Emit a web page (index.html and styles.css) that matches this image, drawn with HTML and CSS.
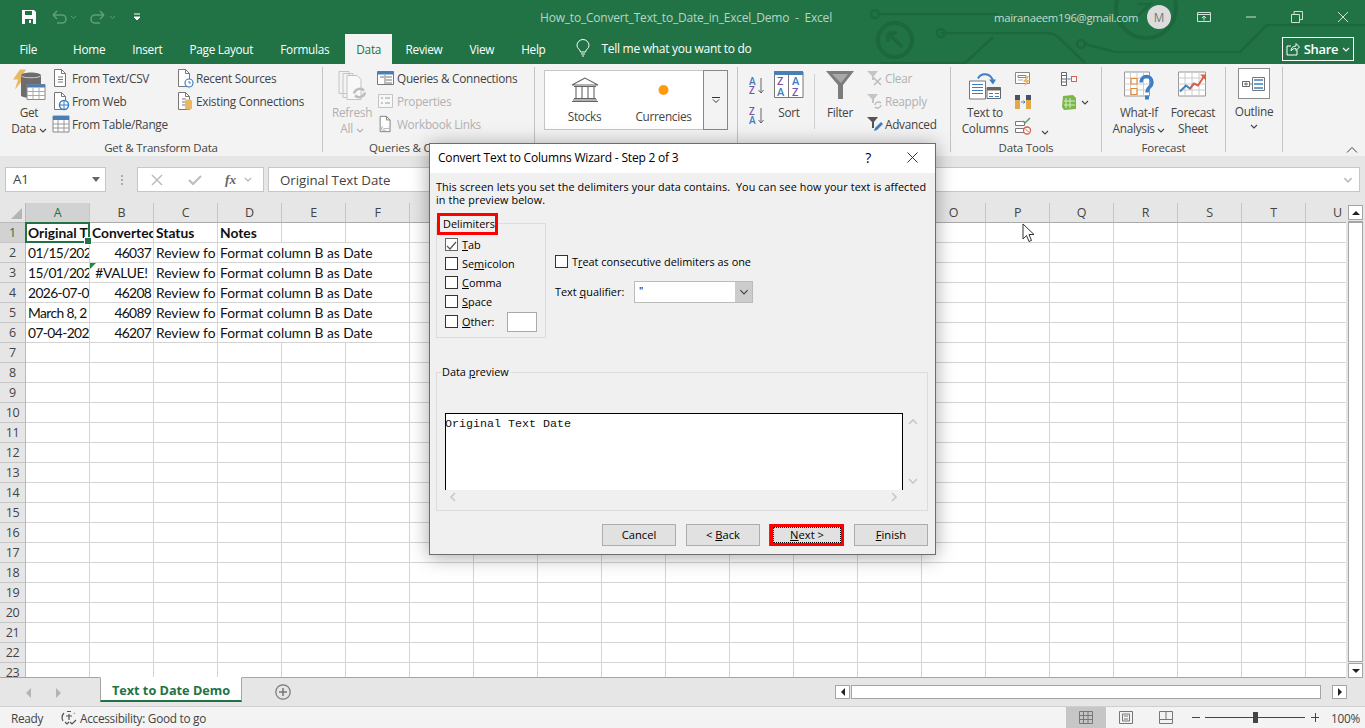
FILE: index.html
```html
<!DOCTYPE html>
<html lang="en">
  <head>
    <meta charset="UTF-8" />
    <title>How_to_Convert_Text_to_Date_in_Excel_Demo - Excel</title>
    <link rel="stylesheet" href="styles.css">
  </head>
  <body>
    <!-- shared icons -->
    <svg class="defs" width="0" height="0">
      <symbol id="page" viewBox="0 0 18 20">
        <path d="M2.5 1.5h7l4 4v13h-11z" fill="#fff" stroke="#777"/>
        <path d="M9.5 1.5v4h4" fill="none" stroke="#777"/>
      </symbol>
      <symbol id="table" viewBox="0 0 18 18">
        <path d="M1 1h16v16H1z" fill="#fff" stroke="#888"/>
        <path d="M1 1h16v4H1z" fill="#4a7fb5"/>
        <path d="M1 9h16M1 13h16M6 5v12M12 5v12" stroke="#999" fill="none"/>
      </symbol>
      <symbol id="chev" viewBox="0 0 8 5">
        <path d="M1 1l3 3 3-3" fill="none" stroke="currentColor" stroke-width="1.1"/>
      </symbol>
    </svg>

    <header class="titlebar">
      <svg class="circuit" width="505" height="64" viewBox="860 0 505 64">
        <g fill="none" stroke="#1c673c" stroke-width="2.5">
          <circle cx="895" cy="40" r="17" stroke-width="4"/>
          <path d="M888 33l14 14M888 33h9M888 33v9" stroke-width="3.5"/>
          <circle cx="875" cy="14" r="4"/>
          <path d="M879 14h120M941 33h105q8 0 12 4l27 26"/>
          <circle cx="941" cy="33" r="4"/>
          <path d="M880 63h85l28-26"/>
          <circle cx="1081" cy="44" r="4"/>
          <path d="M1085 44l30 8h125l27-27h98"/>
          <circle cx="1146" cy="8" r="30" stroke-width="4"/>
          <path d="M1138 4h12l-12 12"/>
        </g>
      </svg>
      <div class="title-row">
        <div class="quick">
          <svg width="16" height="16" viewBox="0 0 16 16"><path d="M1 1h12l2 2v12H1z" fill="#fff"/><path d="M4 2h7v4H4zM4 10h8v5H4z" fill="#217346"/><path d="M8 11h2v3H8z" fill="#fff"/></svg>
          <svg class="dim" width="26" height="16" viewBox="0 0 26 16"><path d="M2 6h9a4 4 0 0 1 0 8H6M2 6l4-4M2 6l4 4" fill="none" stroke="#5f9d7c" stroke-width="1.6"/><path d="M20 7l2.500 2.500L25 7" fill="none" stroke="#5f9d7c"/></svg>
          <svg class="dim" width="26" height="16" viewBox="0 0 26 16"><path d="M14 6H5a4 4 0 0 0 0 8h5M14 6l-4-4M14 6l-4 4" fill="none" stroke="#5f9d7c" stroke-width="1.6"/><path d="M20 7l2.500 2.500L25 7" fill="none" stroke="#5f9d7c"/></svg>
          <svg class="customize" width="8" height="8" viewBox="0 0 8 8"><path d="M1 1h6M1 4h6l-3 3z" fill="#fff" stroke="#fff"/></svg>
        </div>
        <div class="doc-title">How_to_Convert_Text_to_Date_in_Excel_Demo&nbsp; -&nbsp; Excel</div>
        <div class="account">mairanaeem196@gmail.com</div>
        <div class="avatar">M</div>
        <div class="win-btns">
          <svg width="14" height="12" viewBox="0 0 14 12"><path d="M.5 1.500h13v9H.5zM.5 3.500h13M7 9.500V5M5 7l2-2 2 2" fill="none" stroke="#cfe1d6"/></svg>
          <svg width="12" height="12" viewBox="0 0 12 12"><path d="M1 6h10" stroke="#cfe1d6"/></svg>
          <svg width="12" height="12" viewBox="0 0 12 12"><path d="M.5 3.500h8v8h-8zM3 3.500v-3h8.500v8h-3" fill="none" stroke="#cfe1d6"/></svg>
          <svg width="12" height="12" viewBox="0 0 12 12"><path d="M1 1l10 10M11 1L1 11" stroke="#cfe1d6"/></svg>
        </div>
      </div>
      <nav class="tabs">
        <span class="tab tab-file">File</span>
        <span class="tab">Home</span>
        <span class="tab">Insert</span>
        <span class="tab">Page Layout</span>
        <span class="tab">Formulas</span>
        <span class="tab tab-active">Data</span>
        <span class="tab">Review</span>
        <span class="tab">View</span>
        <span class="tab">Help</span>
        <svg class="bulb" width="14" height="17" viewBox="0 0 14 17"><path d="M4.500 12C4 9 1 8.500 1 5.500a6 6 0 0 1 12 0c0 3-3 3.500-3.500 6.500zM5 14h4M6 16h2" fill="none" stroke="#fff"/></svg>
        <span class="tell">Tell me what you want to do</span>
        <div class="share">
          <svg width="14" height="14" viewBox="0 0 14 14"><path d="M5 4H1v9h10V8M5 9c0-3 2-5 5-5V1.500L13.500 5 10 8.500V6.500C8 6.500 6 7 5 9z" fill="none" stroke="#fff"/></svg>
          <span>Share</span>
          <svg width="8" height="5"><use href="#chev"/></svg>
        </div>
      </nav>
    </header>

    <section class="ribbon">
      <!-- get & transform -->
      <div class="group g-get">
        <div class="group-body">
          <div class="big big-get">
            <svg class="big-icon" width="34" height="34" viewBox="0 0 34 34">
              <path d="M8 0h6l-4 7h4L3 20l3-10H1z" fill="#eab765"/>
              <path d="M9 6c0-4 20-4 20 0v20c0 3-20 3-20 0z" fill="#6d6d6d"/>
              <path d="M9 6c0 3 20 3 20 0" fill="none" stroke="#ccc"/>
              <path d="M15 15h18v15H15z" fill="#fff" stroke="#888"/>
              <path d="M15 15h18v3H15z" fill="#4a7fb5"/>
              <path d="M15 22h18M15 26h18M21 18v12M27 18v12" stroke="#aaa"/>
            </svg>
            <span>Get</span>
            <span>Data <svg width="8" height="5"><use href="#chev"/></svg></span>
          </div>
          <div class="list list-a">
            <div class="small">
              <svg width="18" height="20" viewBox="0 0 18 20"><use href="#page"/><path d="M6 9h5M6 11.500h5M6 14h5" stroke="#777"/></svg>
              <span>From Text/CSV</span>
            </div>
            <div class="small">
              <svg width="18" height="20" viewBox="0 0 18 20"><use href="#page"/><circle cx="12" cy="14" r="4.500" fill="#fff" stroke="#3d7fc1" stroke-width="1.500"/><path d="M7.500 14h9M12 9.500v9" stroke="#3d7fc1"/></svg>
              <span>From Web</span>
            </div>
            <div class="small">
              <svg width="18" height="18"><use href="#table"/></svg>
              <span>From Table/Range</span>
            </div>
          </div>
          <div class="list list-b">
            <div class="small">
              <svg width="18" height="20" viewBox="0 0 18 20"><use href="#page"/><circle cx="13" cy="15" r="4" fill="#fff" stroke="#3d7fc1" stroke-width="1.200"/><path d="M13 13v2h2" fill="none" stroke="#3d7fc1"/></svg>
              <span>Recent Sources</span>
            </div>
            <div class="small">
              <svg width="18" height="20" viewBox="0 0 18 20"><use href="#page"/><path d="M6 8h4M6 11h3M6 14h3" stroke="#777"/><path d="M9 10c0-2 7-2 7 0v7c0 2-7 2-7 0z" fill="#eab765"/></svg>
              <span>Existing Connections</span>
            </div>
          </div>
        </div>
        <div class="group-label">Get &amp; Transform Data</div>
      </div>

      <!-- queries -->
      <div class="group g-queries">
        <div class="group-body">
          <div class="big big-refresh off">
            <svg class="big-icon" width="32" height="34" viewBox="0 0 32 34">
              <path d="M3 2h10v22H3zM7 4h10v24H7z" fill="#f3f3f3" stroke="#c4c4c4"/>
              <path d="M11 6h10l4 4v20H11z" fill="#f8f8f8" stroke="#c4c4c4"/>
              <path d="M18 24a6 6 0 0 1 10-3M29 23a6 6 0 0 1-10 3" fill="none" stroke="#bdbdbd" stroke-width="2.500"/>
            </svg>
            <span>Refresh</span>
            <span>All <svg width="8" height="5"><use href="#chev"/></svg></span>
          </div>
          <div class="list list-q">
            <div class="small">
              <svg width="18" height="16" viewBox="0 0 18 16"><path d="M.5 1.500h16v13H.5z" fill="#fff" stroke="#777"/><path d="M.5 1.500h16v3H.5z" fill="#4a7fb5"/><path d="M3 7h4M9 7h6M9 10h6M9 13h6M8 5v9" stroke="#777"/></svg>
              <span>Queries &amp; Connections</span>
            </div>
            <div class="small off">
              <svg width="18" height="18" viewBox="0 0 18 18"><path d="M1.500 2.500h14v13h-14z" fill="#f7f7f7" stroke="#c4c4c4"/><path d="M4 6h2M4 11h2M8 6h5M8 11h5" stroke="#bbb" stroke-width="1.500"/></svg>
              <span>Properties</span>
            </div>
            <div class="small off">
              <svg width="18" height="18" viewBox="0 0 18 20"><use href="#page"/><path d="M6 15h8M6 13a2 2 0 0 0 0 4h3M12 13a2 2 0 0 1 0 4" fill="none" stroke="#bbb" stroke-width="1.200"/></svg>
              <span>Workbook Links</span>
            </div>
          </div>
        </div>
        <div class="group-label">Queries &amp; Connections</div>
      </div>

      <!-- data types -->
      <div class="group g-types">
        <div class="gallery">
          <div class="gal-item">
            <svg width="28" height="25" viewBox="0 0 28 25"><path d="M14 1L1 8h26zM2 23h24M1 24.500h26M5 10v12M11 10v12M17 10v12M23 10v12M3 9.500h22M3 21.500h22" fill="none" stroke="#666" stroke-width="1.100"/></svg>
            <span>Stocks</span>
          </div>
          <div class="gal-item">
            <svg width="28" height="25" viewBox="0 0 28 25"><circle cx="13.500" cy="13" r="5" fill="#ff9a0d"/></svg>
            <span>Currencies</span>
          </div>
          <div class="gal-more">
            <svg width="8" height="6" viewBox="0 0 8 6"><path d="M0 .5h8M1 2.500l3 3 3-3" fill="none" stroke="#333"/></svg>
          </div>
        </div>
      </div>

      <!-- sort & filter -->
      <div class="group g-sort">
        <div class="group-body">
          <div class="az-col">
            <svg width="16" height="18" viewBox="0 0 16 18"><text x="0" y="8" class="sa">A</text><text x="0" y="17" class="sz">Z</text><path d="M12 1v15M9.500 13l2.500 3 2.500-3" fill="none" stroke="#666"/></svg>
            <svg width="16" height="18" viewBox="0 0 16 18"><text x="0" y="8" class="sz">Z</text><text x="0" y="17" class="sa">A</text><path d="M12 1v15M9.500 13l2.500 3 2.500-3" fill="none" stroke="#666"/></svg>
          </div>
          <div class="big big-sort">
            <svg class="big-icon" width="30" height="27" viewBox="0 0 30 27"><path d="M.5 1h28.500v25.500H.5zM14.500 4v22" fill="#fff" stroke="#777"/><path d="M0 0h29v4H0z" fill="#4a7fb5"/><text x="3" y="14" class="sz big-l">Z</text><text x="3" y="25" class="sa big-l">A</text><text x="18" y="14" class="sa big-l">A</text><text x="18" y="25" class="sz big-l">Z</text></svg>
            <span>Sort</span>
          </div>
          <div class="vsep"></div>
          <div class="big big-filter">
            <svg class="big-icon" width="28" height="28" viewBox="0 0 28 28"><path d="M0 0h28L17 14v14h-5V14z" fill="#7c7c7c"/><path d="M6 3h16l-7 9z" fill="#a8a8a8"/></svg>
            <span>Filter</span>
          </div>
          <div class="list list-f">
            <div class="small off">
              <svg width="16" height="16" viewBox="0 0 16 16"><path d="M0 1h11L7 6v4H5V6z" fill="#c4c4c4"/><path d="M7 8l7 7M14 8l-7 7" stroke="#bbb" stroke-width="1.500"/></svg>
              <span>Clear</span>
            </div>
            <div class="small off">
              <svg width="16" height="16" viewBox="0 0 16 16"><path d="M0 1h11L7 6v4H5V6z" fill="#c4c4c4"/><path d="M8 12a3.500 3.500 0 0 1 6-2M14 12a3.500 3.500 0 0 1-6 2" fill="none" stroke="#bbb" stroke-width="1.500"/></svg>
              <span>Reapply</span>
            </div>
            <div class="small">
              <svg width="16" height="16" viewBox="0 0 16 16"><path d="M0 1h11L7 6v6H5V6z" fill="#555"/><path d="M7 15l1-3 6-6 2 2-6 6z" fill="#3d7fc1"/></svg>
              <span>Advanced</span>
            </div>
          </div>
        </div>
        <div class="group-label">Sort &amp; Filter</div>
      </div>

      <!-- data tools -->
      <div class="group g-tools">
        <div class="group-body">
          <div class="big big-ttc">
            <svg class="big-icon" width="32" height="28" viewBox="0 0 32 28">
              <path d="M.5 8.500h16v18H.5z" fill="#fff" stroke="#777"/>
              <path d="M3 12h11M3 15h11M3 18h11M3 21h11" stroke="#3d7fc1"/>
              <path d="M18 15h13.500v11H18z" fill="#fff" stroke="#666"/>
              <path d="M18 15h13.500v3H18z" fill="#666"/>
              <path d="M20 21h4M26 21h4M20 24h4M26 24h4" stroke="#3d7fc1"/>
              <path d="M9 6c3-6 12-6 15 2" fill="none" stroke="#3d7fc1" stroke-width="2"/>
              <path d="M20 7l4 5 3-5z" fill="#3d7fc1"/>
            </svg>
            <span>Text to</span>
            <span>Columns</span>
          </div>
          <div class="list list-t">
            <svg width="16" height="16" viewBox="0 0 16 16"><path d="M.5 1.500h14v11H.5z" fill="#fff" stroke="#888"/><path d="M3 4.500h8v2H3z" fill="#fff" stroke="#5c9f72"/><path d="M3 9h5" stroke="#aaa"/><path d="M12 5l-4 6h3l-2 5 6-7h-3l2-4z" fill="#eab765"/></svg>
            <svg width="16" height="16" viewBox="0 0 16 16"><path d="M0 1h5v14H0zM11 1h5v14h-5z" fill="#e3a84a"/><path d="M0 1h5v5H0zM11 1h5v5h-5z" fill="#44546a"/><path d="M6 8h4M8.500 6.500L10 8 8.500 9.500" fill="none" stroke="#3d7fc1"/></svg>
            <svg width="16" height="18" viewBox="0 0 16 18"><path d="M.5 4.500h9v4h-9zM.5 11.500h9v4h-9z" fill="#fff" stroke="#777"/><path d="M8 4l2 2 5-5" fill="none" stroke="#5c9f72" stroke-width="1.500"/><circle cx="12" cy="13.500" r="3.500" fill="#fff" stroke="#d9604a" stroke-width="1.300"/><path d="M10 11.500l4 4" stroke="#d9604a"/></svg>
          </div>
          <div class="t-chev"><svg width="8" height="5"><use href="#chev"/></svg></div>
          <div class="list list-u">
            <svg width="16" height="16" viewBox="0 0 16 16"><path d="M.5 1.500h5v13h-5zM.5 4.500h5M.5 8h5M.5 11h5M10.500 5.500h5v5h-5z" fill="#fff" stroke="#666"/><path d="M10.500 5.500h5v5h-5z" fill="none" stroke="#d9604a"/><path d="M6.500 8h3" stroke="#3d7fc1"/></svg>
            <div class="small">
              <svg width="16" height="17" viewBox="0 0 16 17"><path d="M2 2l10-1 3 3v11l-12 1-2-3z" fill="#7ab648"/><path d="M5 4v10M9 4v10M3 7h11M3 11h11" stroke="#d5edc5"/></svg>
              <svg width="8" height="5"><use href="#chev"/></svg>
            </div>
          </div>
        </div>
        <div class="group-label">Data Tools</div>
      </div>

      <!-- forecast -->
      <div class="group g-cast">
        <div class="group-body">
          <div class="big big-whatif">
            <svg class="big-icon" width="30" height="30" viewBox="0 0 30 30">
              <path d="M.5.500h25v24H.5z" fill="#fff" stroke="#999"/>
              <path d="M6.500.5v24M13 .5v24M19.500.5v24M.5 6.500h25M.5 12.500h25M.5 18.500h25" stroke="#ccc"/>
              <path d="M7 7h6v5.500H7zM7 17h6v6H7z" fill="#fff" stroke="#e08a3c" stroke-width="1.200"/>
              <path d="M17 11c0-8 11-8 11 0 0 5-5 4-5 10" fill="none" stroke="#3d7fc1" stroke-width="3.500"/>
              <path d="M21 24h4v4h-4z" fill="#3d7fc1"/>
            </svg>
            <span>What-If</span>
            <span>Analysis <svg width="8" height="5"><use href="#chev"/></svg></span>
          </div>
          <div class="big big-fsheet">
            <svg class="big-icon" width="30" height="30" viewBox="0 0 30 30">
              <path d="M.5.500h27v24H.5z" fill="#fff" stroke="#999"/>
              <path d="M7 .5v24M14 .5v24M21 .5v24M.5 6.500h27M.5 12.500h27M.5 18.500h27" stroke="#ccc"/>
              <path d="M2 20l6-6 4 3 4-5" fill="none" stroke="#3d7fc1" stroke-width="2"/>
              <path d="M12 17l4-5 4 2 6-9" fill="none" stroke="#d9604a" stroke-width="2"/>
              <path d="M22 3h6v6z" fill="#d9604a"/>
            </svg>
            <span>Forecast</span>
            <span>Sheet</span>
          </div>
        </div>
        <div class="group-label">Forecast</div>
      </div>

      <!-- outline -->
      <div class="group g-outline">
        <div class="outline-box">
          <svg width="24" height="14" viewBox="0 0 24 14"><path d="M.5 4.500h7v5h-7zM2 7h4M4 5.500v3" fill="none" stroke="#666"/><path d="M7.500 7h3" stroke="#888"/><path d="M10.500 .5h12v13h-12z" fill="#fff" stroke="#777"/><path d="M12 3h9M12 7h9M12 11h9" stroke="#3d7fc1" stroke-width="1.500"/></svg>
        </div>
        <span>Outline</span>
        <svg width="8" height="5"><use href="#chev"/></svg>
      </div>
      <svg class="collapse" width="10" height="6" viewBox="0 0 10 6"><path d="M0 5.500l5-5 5 5" fill="none" stroke="#444"/></svg>
    </section>

    <section class="formula-bar">
      <div class="name-box">A1<i class="tri"></i></div>
      <div class="dots"></div>
      <div class="fx-box">
        <svg width="12" height="12" viewBox="0 0 12 12"><path d="M1 1l10 10M11 1L1 11" stroke="#bdbdbd" stroke-width="1.500"/></svg>
        <svg width="14" height="12" viewBox="0 0 14 12"><path d="M1 6l4 4 8-8" fill="none" stroke="#bdbdbd" stroke-width="2"/></svg>
        <span class="fx">fx</span>
        <svg class="fx-chev" width="8" height="5"><use href="#chev"/></svg>
      </div>
      <div class="fx-input">
        <span>Original Text Date</span>
        <svg width="10" height="6" viewBox="0 0 8 5"><path d="M1 1l3 3 3-3" fill="none" stroke="#bdbdbd" stroke-width="1.400"/></svg>
      </div>
    </section>

    <section class="sheet-area">
      <div class="sheet">
        <div class="col-heads">
          <div class="corner"><i></i></div>
          <div class="col col-sel">A</div><div class="col">B</div><div class="col">C</div>
          <div class="col">D</div><div class="col">E</div><div class="col">F</div>
          <div class="col">G</div><div class="col">H</div><div class="col">I</div>
          <div class="col">J</div><div class="col">K</div><div class="col">L</div>
          <div class="col">M</div><div class="col">N</div><div class="col">O</div>
          <div class="col">P</div><div class="col">Q</div><div class="col">R</div>
          <div class="col">S</div><div class="col">T</div><div class="col">U</div>
        </div>
        <div class="sheet-body">
          <div class="row-heads">
            <div class="rh rh-sel">1</div><div class="rh">2</div><div class="rh">3</div><div class="rh">4</div>
            <div class="rh">5</div><div class="rh">6</div><div class="rh">7</div><div class="rh">8</div>
            <div class="rh">9</div><div class="rh">10</div><div class="rh">11</div><div class="rh">12</div>
            <div class="rh">13</div><div class="rh">14</div><div class="rh">15</div><div class="rh">16</div>
            <div class="rh">17</div><div class="rh">18</div><div class="rh">19</div><div class="rh">20</div>
            <div class="rh">21</div><div class="rh">22</div><div class="rh">23</div>
          </div>
          <div class="cells">
            <div class="cell b">Original T</div>
            <div class="cell b">Convertec</div>
            <div class="cell b">Status</div>
            <div class="cell b">Notes</div>
            <div class="row-end"></div>

            <div class="cell date">01/15/202</div>
            <div class="cell num">46037</div>
            <div class="cell">Review fo</div>
            <div class="cell wide">Format column B as Date</div>

            <div class="cell date">15/01/202</div>
            <div class="cell err">#VALUE!</div>
            <div class="cell">Review fo</div>
            <div class="cell wide">Format column B as Date</div>

            <div class="cell date">2026-07-0</div>
            <div class="cell num">46208</div>
            <div class="cell">Review fo</div>
            <div class="cell wide">Format column B as Date</div>

            <div class="cell date">March 8, 2</div>
            <div class="cell num">46089</div>
            <div class="cell">Review fo</div>
            <div class="cell wide">Format column B as Date</div>

            <div class="cell date">07-04-202</div>
            <div class="cell num">46207</div>
            <div class="cell">Review fo</div>
            <div class="cell wide">Format column B as Date</div>

            <div class="selection"></div>
            <div class="err-mark"></div>
            <!-- mouse pointer in the capture -->
            <svg class="pointer" width="13" height="20" viewBox="0 0 13 20"><path d="M1 1v15l3.500-3.500 2.500 6 2.500-1-2.500-6H12z" fill="#fff" stroke="#333"/></svg>
          </div>
        </div>
      </div>
      <div class="vscroll">
        <div class="sb-btn"><i class="arrow-up"></i></div>
        <div class="v-thumb"></div>
        <div class="sb-btn"><i class="arrow-down"></i></div>
      </div>
    </section>

    <section class="sheet-tabs">
      <div class="tab-nav">
        <i class="nav-left"></i>
        <i class="nav-right"></i>
      </div>
      <div class="sheet-tab">Text to Date Demo</div>
      <svg class="add-sheet" width="16" height="16" viewBox="0 0 16 16"><circle cx="8" cy="8" r="7.200" fill="none" stroke="#777" stroke-width="1.200"/><path d="M8 4v8M4 8h8" stroke="#777" stroke-width="1.500"/></svg>
      <div class="hscroll">
        <div class="sb-btn"><i class="arrow-left"></i></div>
        <div class="h-thumb"></div>
        <div class="sb-btn sb-right"><i class="arrow-right"></i></div>
      </div>
    </section>

    <footer class="status">
      <span class="ready">Ready</span>
      <svg width="16" height="16" viewBox="0 0 16 16"><path d="M3 3a7 7 0 0 0-1 8M13 3l.5.500M6 1.500h4M8 4v6M5 6h6M4 12l2 2 2-2M9 12l2 2 4-4" fill="none" stroke="#555" stroke-width="1.200"/></svg>
      <span class="access">Accessibility: Good to go</span>
      <div class="status-right">
        <div class="view view-on">
          <svg width="14" height="13" viewBox="0 0 14 13"><path d="M.5.500h13v12H.5zM.5 4.500h13M.5 8.500h13M4.500.5v12M9 .5v12" fill="none" stroke="#777"/></svg>
        </div>
        <div class="view">
          <svg width="14" height="13" viewBox="0 0 14 13"><path d="M.5.500h13v12H.5zM3.500 3h7v7h-7zM5 5h4M5 8h4" fill="none" stroke="#777"/></svg>
        </div>
        <div class="view">
          <svg width="14" height="13" viewBox="0 0 14 13"><path d="M.5.500h13v12H.5zM.5 8.500h13M7 .5v8" fill="none" stroke="#777"/></svg>
        </div>
        <div class="zoom">
          <i class="z-minus"></i>
          <div class="z-track"><i></i></div>
          <i class="z-plus"></i>
        </div>
        <span class="pct">100%</span>
      </div>
    </footer>

    <!-- wizard -->
    <div class="dialog">
      <div class="dlg-title">
        <span>Convert Text to Columns Wizard - Step 2 of 3</span>
        <span class="dlg-help">?</span>
        <svg width="11" height="11" viewBox="0 0 11 11"><path d="M.5.500l10 10M10.500.5l-10 10" stroke="#333"/></svg>
      </div>
      <div class="dlg-body">
        <p class="dlg-desc">This screen lets you set the delimiters your data contains.&nbsp; You can see how your text is affected in the preview below.</p>
        <div class="opts">
          <div class="delims">
            <div class="delims-legend">Delimiters</div>
            <label class="chk"><i class="box checked"><svg width="11" height="10" viewBox="0 0 11 10"><path d="M1 5l3 3 6-7" fill="none" stroke="#555" stroke-width="1.200"/></svg></i><span><u>T</u>ab</span></label>
            <label class="chk"><i class="box"></i><span>Se<u>m</u>icolon</span></label>
            <label class="chk"><i class="box"></i><span><u>C</u>omma</span></label>
            <label class="chk"><i class="box"></i><span><u>S</u>pace</span></label>
            <label class="chk chk-other"><i class="box"></i><span><u>O</u>ther:</span><i class="other-input"></i></label>
          </div>
          <div class="opts-right">
            <label class="chk"><i class="box"></i><span>T<u>r</u>eat consecutive delimiters as one</span></label>
            <div class="qualifier">
              <span class="q-label">Text <u>q</u>ualifier:</span>
              <div class="select">
                <span>"</span>
                <div class="select-btn"><svg width="10" height="6" viewBox="0 0 8 5"><path d="M1 1l3 3 3-3" fill="none" stroke="#444"/></svg></div>
              </div>
            </div>
          </div>
        </div>
        <div class="preview-set">
          <div class="preview-legend">Data <u>p</u>review</div>
          <div class="preview-row">
            <div class="preview">Original Text Date</div>
            <div class="pv-vbar">
              <svg width="10" height="6" viewBox="0 0 10 6"><path d="M1 5l4-4 4 4" fill="none" stroke="#c8c8c8" stroke-width="1.600"/></svg>
              <svg width="10" height="6" viewBox="0 0 10 6"><path d="M1 1l4 4 4-4" fill="none" stroke="#c8c8c8" stroke-width="1.600"/></svg>
            </div>
          </div>
          <div class="pv-hbar">
            <svg width="6" height="10" viewBox="0 0 6 10"><path d="M5 1L1 5l4 4" fill="none" stroke="#c8c8c8" stroke-width="1.600"/></svg>
            <svg width="6" height="10" viewBox="0 0 6 10"><path d="M1 1l4 4-4 4" fill="none" stroke="#c8c8c8" stroke-width="1.600"/></svg>
          </div>
        </div>
        <div class="dlg-btns">
          <button type="button">Cancel</button>
          <button type="button">&lt; <u>B</u>ack</button>
          <button type="button" class="btn-next"><span><u>N</u>ext &gt;</span></button>
          <button type="button"><u>F</u>inish</button>
        </div>
      </div>
    </div>
  </body>
</html>
```

FILE: styles.css
```css
* {
  box-sizing: border-box;
  margin: 0;
  padding: 0;
}

:root {
  --green: #217346;
  --ribbon: #f3f3f3;
  --chrome: #e6e6e6;
  --line: #d4d4d4;
  --text: #444;
  --off: #b1b1b1;
}

body {
  position: relative;
  width: 1365px;
  height: 728px;
  overflow: hidden;
  display: flex;
  flex-direction: column;
  background-color: var(--chrome);
  color: var(--text);
  font-family: 'Open Sans', sans-serif;
  font-size: 11.8px;
  letter-spacing: -0.28px;
}

i {
  display: block;
  font-style: normal;
}

svg {
  overflow: visible;
}

.defs {
  position: absolute;
}

/* title bar + tabs */
.titlebar {
  position: relative;
  height: 64px;
  background-color: var(--green);
  color: #fff;
}

.circuit {
  position: absolute;
  top: 0;
  left: 860px;
  overflow: hidden;
}

.title-row {
  position: relative;
  height: 34px;
  display: flex;
  align-items: center;
}

.quick {
  width: 478px;
  padding-left: 21px;
  display: flex;
  align-items: center;
  gap: 14px;
}

.quick .dim + .dim {
  margin-left: -1px;
}

.customize {
  margin-left: 3px;
}

.doc-title {
  width: 402px;
  margin-left: 62px;
  color: #b9d5c5;
  font-size: 12px;
  letter-spacing: -0.2px;
}

.account {
  width: 160px;
  margin-left: 52px;
  color: #c6dccf;
  font-size: 11.3px;
}

.avatar {
  width: 24px;
  height: 24px;
  border-radius: 50%;
  margin-left: -7px;
  background-color: #dcdcdc;
  color: #777;
  text-align: center;
  line-height: 24px;
}

.win-btns {
  display: flex;
  align-items: center;
  margin-left: 26px;
  gap: 34px;
}

.tabs {
  position: relative;
  height: 30px;
  display: flex;
  align-items: stretch;
  padding-left: 6px;
}

.tab {
  padding: 0 13.5px;
  line-height: 31px;
}

.tab-file {
  margin-right: 9px;
}

.tab-active {
  padding: 0 11px;
  margin-left: 2.500px;
  background-color: var(--ribbon);
  color: var(--green);
}

.bulb {
  margin: 6px 0 0 16.500px;
}

.tell {
  margin-left: 12px;
  line-height: 30px;
  font-size: 12px;
  letter-spacing: -0.29px;
}

.share {
  position: absolute;
  left: 1282px;
  top: 3px;
  width: 72px;
  height: 24px;
  border: 1px solid #fff;
  display: flex;
  align-items: center;
  justify-content: center;
  gap: 4px;
  font-size: 13px;
  font-weight: 600;
}

/* ribbon */
.ribbon {
  position: relative;
  height: 92px;
  padding-top: 3px;
  display: flex;
  background-color: var(--ribbon);
}

.group {
  height: 85px;
  border-right: 1px solid #c4c4c4;
}

.group-body {
  height: 74px;
  display: flex;
}

.group-label {
  height: 11px;
  line-height: 14px;
  text-align: center;
  font-size: 11.5px;
  letter-spacing: -0.2px;
}

.g-get { width: 323px; }
.g-queries { width: 212px; }
.g-types { width: 203px; padding: 3px 0 0 9px; }
.g-sort { width: 213px; }
.g-tools { width: 151px; }
.g-cast { width: 124px; }

.big {
  display: flex;
  flex-direction: column;
  align-items: center;
  line-height: 16px;
}

.big-icon {
  height: 37px;
  padding-top: 2px;
}

.big-get { width: 50px; margin-left: 4px; }
.big-refresh { width: 52px; margin-left: 3px; }
.big-sort { width: 40px; margin-left: 4px; }
.big-filter { width: 50px; }
.big-ttc { width: 64px; margin-left: 2px; }
.big-whatif { width: 68px; margin-left: 3px; }
.big-fsheet { width: 50px; margin-left: -5px; }

.big-sort .big-icon { padding: 4px 0 6px; }
.big-filter .big-icon { padding: 4px 0 5px; }

.off {
  color: var(--off);
}

.list {
  display: flex;
  flex-direction: column;
}

.small {
  height: 23px;
  display: flex;
  align-items: center;
  gap: 2px;
}

.list-a { width: 125px; margin: -1px 0 0 -2px; }
.list-b { margin: -1px 0 0 -1px; }
.list-q { margin: -1px 0 0 -1px; }
.list-f { margin: -1px 0 0 2px; }
.list-t { width: 26px; margin-left: -2px; gap: 7px; padding-top: 4px; }
.list-u { margin-left: 12px; gap: 6px; padding-top: 4px; }
.list-u .small { height: 18px; gap: 4px; }
.t-chev { padding-top: 55px; width: 8px; }
.list-u svg { flex: none; }

.gallery {
  width: 184px;
  height: 60px;
  display: flex;
  border: 1px solid #c6c6c6;
  background-color: #fff;
}

.gal-item {
  width: 79px;
  display: flex;
  flex-direction: column;
  align-items: center;
  padding-top: 6px;
  gap: 6px;
}

.gal-more {
  flex: 1;
  margin: -1px -1px -1px 0;
  border: 1px solid #888;
  background-color: var(--ribbon);
  display: flex;
  align-items: center;
  justify-content: center;
}

.az-col {
  width: 16px;
  margin-left: 11px;
  display: flex;
  flex-direction: column;
  gap: 12px;
  padding-top: 10px;
}

.sa, .sz {
  font-family: 'Open Sans', sans-serif;
  font-size: 10px;
  font-weight: 600;
}

.sa { fill: #3d7fc1; }
.sz { fill: #7d4fa8; }
.big-l { font-size: 11px; }

.vsep {
  width: 1px;
  height: 55px;
  margin: 7px 0 0 5px;
  background-color: #d0d0d0;
}

.g-outline {
  width: 57px;
  display: flex;
  flex-direction: column;
  align-items: center;
  padding-top: 1px;
  line-height: 14px;
}

.outline-box {
  width: 32px;
  height: 31px;
  border: 1px solid #8c8c8c;
  background-color: #fff;
  display: flex;
  align-items: center;
  justify-content: center;
  margin-bottom: 5px;
}

.g-outline > svg:last-child {
  margin-top: 6px;
}

.collapse {
  position: absolute;
  left: 1347px;
  top: 83px;
}

/* formula bar */
.formula-bar {
  height: 47px;
  padding: 11px 5px 0;
  display: flex;
  align-items: flex-start;
  font-size: 13.3px;
  letter-spacing: -0.05px;
}

.name-box {
  position: relative;
  width: 101px;
  height: 25px;
  padding-left: 7px;
  border: 1px solid #c6c6c6;
  background-color: #fff;
  line-height: 23px;
}

.tri {
  position: absolute;
  right: 5px;
  top: 9px;
  border: 4px solid transparent;
  border-top: 5px solid #666;
}

.dots {
  width: 2px;
  height: 10px;
  margin: 8px 14px 0 15px;
  background: repeating-linear-gradient(#aaa 0 2px, transparent 2px 4px);
}

.fx-box {
  width: 127px;
  height: 25px;
  border: 1px solid #c6c6c6;
  background-color: #fff;
  display: flex;
  align-items: center;
  padding-left: 13px;
  gap: 25px;
}

.fx {
  font-family: 'Liberation Serif', serif;
  font-style: italic;
  font-weight: 700;
  color: #666;
  margin-left: -2px;
}

.fx-chev {
  margin-left: -17px;
  color: var(--off);
}

.fx-input {
  width: 1092px;
  height: 25px;
  margin-left: 4px;
  padding: 0 6px 0 11px;
  border: 1px solid #c6c6c6;
  background-color: #fff;
  display: flex;
  align-items: center;
  justify-content: space-between;
}

/* sheet */
.sheet-area {
  height: 475px;
  display: flex;
}

.sheet {
  width: 1346px;
  overflow: hidden;
  border-bottom: 1px solid #a5a5a5;
}

.col-heads {
  height: 20px;
  display: flex;
}

.corner {
  flex: none;
  width: 26px;
  border-right: 1px solid #b9b9b9;
  border-bottom: 1px solid #b9b9b9;
  padding: 5px 0 0 11px;
}

.corner i {
  width: 0;
  height: 0;
  border-left: 11px solid transparent;
  border-bottom: 11px solid #b4b4b4;
}

.col {
  flex: none;
  width: 64px;
  border-right: 1px solid #c6c6c6;
  border-bottom: 1px solid #ababab;
  text-align: center;
  line-height: 20px;
  font-size: 12.5px;
}

.col-sel {
  background-color: #d2d2d2;
  color: var(--green);
}

.sheet-body {
  display: flex;
  height: 455px;
}

.row-heads {
  flex: none;
  width: 26px;
  border-right: 1px solid #b9b9b9;
}

.rh {
  height: 20px;
  border-bottom: 1px solid #c6c6c6;
  text-align: center;
  line-height: 20px;
  font-size: 12.5px;
}

.rh-sel {
  background-color: #d2d2d2;
  color: var(--green);
}

.cells {
  position: relative;
  flex: 1;
  display: grid;
  grid-template-columns: repeat(6, 64px);
  grid-auto-rows: 20px;
  align-content: start;
  background-color: #fff;
  background-image:
    repeating-linear-gradient(to right, transparent 0 63px, var(--line) 63px 64px),
    repeating-linear-gradient(to bottom, transparent 0 19px, var(--line) 19px 20px);
  color: #111;
  font-family: 'Lato', sans-serif;
  font-size: 13.8px;
  letter-spacing: 0;
}

.cell {
  padding: 0 2px;
  border-right: 1px solid var(--line);
  border-bottom: 1px solid var(--line);
  white-space: nowrap;
  overflow: hidden;
  line-height: 20px;
}

.b { font-weight: 700; }
.num { text-align: right; letter-spacing: -0.7px; }
.date { letter-spacing: -0.6px; }
.err { text-align: center; letter-spacing: -0.3px; }

.wide {
  grid-column: span 3;
  background-color: #fff;
}

.row-end {
  grid-column: span 2;
}

.selection {
  position: absolute;
  left: -1px;
  top: -1px;
  width: 65px;
  height: 21px;
  border: 2px solid var(--green);
}

.selection::after {
  content: '';
  position: absolute;
  right: -4px;
  bottom: -4px;
  width: 6px;
  height: 6px;
  background-color: var(--green);
  border: 1px solid #fff;
}

.err-mark {
  position: absolute;
  left: 64px;
  top: 40px;
  border-top: 6px solid #1f8a3b;
  border-right: 6px solid transparent;
}

.pointer {
  position: absolute;
  left: 996px;
  top: 0;
}

.vscroll {
  width: 19px;
  padding: 2px 2px 0 2px;
  display: flex;
  flex-direction: column;
}

.sb-btn {
  flex: none;
  width: 15px;
  height: 15px;
  border: 1px solid #a5a5a5;
  background-color: #fff;
  display: flex;
  align-items: center;
  justify-content: center;
}

.v-thumb {
  flex: 1;
  margin: 1px 0;
  border: 1px solid #a5a5a5;
  border-top-width: 2px;
  background-color: #fff;
}

.arrow-up {
  border: 4px solid transparent;
  border-bottom: 4px solid #222;
  border-top: 0;
}

.arrow-down {
  border: 4px solid transparent;
  border-top: 4px solid #222;
  border-bottom: 0;
}

.arrow-left {
  border: 4px solid transparent;
  border-right: 4px solid #222;
  border-left: 0;
}

.arrow-right {
  border: 4px solid transparent;
  border-left: 4px solid #222;
  border-right: 0;
}

/* sheet tabs */
.sheet-tabs {
  height: 28px;
  display: flex;
  align-items: flex-start;
}

.tab-nav {
  width: 100px;
  display: flex;
  padding: 10px 0 0 26px;
  gap: 25px;
}

.nav-left {
  border: 5px solid transparent;
  border-right: 5px solid #b4b4b4;
  border-left: 0;
}

.nav-right {
  border: 5px solid transparent;
  border-left: 5px solid #b4b4b4;
  border-right: 0;
}

.sheet-tab {
  width: 142px;
  height: 25px;
  margin-top: -1px;
  border: 1px solid #a5a5a5;
  border-top-color: #fff;
  border-bottom: 2px solid var(--green);
  background-color: #fff;
  color: var(--green);
  text-align: center;
  line-height: 25px;
  font-size: 12.7px;
  font-weight: 700;
  letter-spacing: 0;
}

.add-sheet {
  margin: 6px 0 0 33px;
}

.hscroll {
  margin: 7px 0 0 544px;
  display: flex;
}

.hscroll .sb-btn {
  height: 14px;
}

.h-thumb {
  width: 470px;
  height: 14px;
  margin-left: 1px;
  border: 1px solid #a5a5a5;
  background-color: #fff;
}

.sb-right {
  margin-left: 11px;
}

/* status bar */
.status {
  height: 22px;
  border-top: 1px solid #cfcfcf;
  background-color: var(--ribbon);
  display: flex;
  align-items: center;
  padding-left: 11px;
}

.ready {
  width: 50px;
}

.access {
  margin-left: 3px;
}

.status-right {
  position: absolute;
  left: 1066px;
  bottom: 0;
  height: 21px;
  display: flex;
  align-items: center;
}

.view {
  width: 40px;
  height: 21px;
  display: flex;
  align-items: center;
  justify-content: center;
}

.view-on {
  background-color: #c6c6c6;
}

.zoom {
  margin-left: 6px;
  width: 134px;
  display: flex;
  align-items: center;
  gap: 5px;
}

.z-minus {
  width: 8px;
  height: 1px;
  background-color: #444;
}

.z-track {
  position: relative;
  width: 100px;
  height: 1px;
  background-color: #444;
}

.z-track i {
  position: absolute;
  left: 48px;
  top: -5px;
  width: 5px;
  height: 11px;
  background-color: #444;
}

.z-plus {
  position: relative;
  width: 8px;
  height: 1px;
  margin-left: 1px;
  background-color: #444;
}

.z-plus::after {
  content: '';
  position: absolute;
  left: 3.500px;
  top: -4px;
  width: 1px;
  height: 9px;
  background-color: #444;
}

.pct {
  margin-left: 5px;
}

/* wizard dialog */
.dialog {
  position: absolute;
  left: 429px;
  top: 143px;
  width: 507px;
  height: 412px;
  border: 1px solid #6d6d6d;
  background-color: #f0f0f0;
  box-shadow: 0 2px 18px rgba(0, 0, 0, 0.35);
  color: #000;
  font-size: 10.9px;
  letter-spacing: 0;
}

.dlg-title {
  height: 29px;
  background-color: #fff;
  display: flex;
  align-items: center;
  padding: 0 17px 2px 8px;
  font-size: 12px;
  letter-spacing: -0.2px;
}

.dlg-help {
  margin-left: auto;
  margin-right: 36px;
  font-size: 14px;
  line-height: 16px;
}

.dlg-body {
  padding: 7px 7px 0 6px;
}

.dlg-desc {
  width: 494px;
  line-height: 13px;
  height: 26px;
  font-size: 10.8px;
  letter-spacing: 0.1px;
}

.opts {
  display: flex;
  margin-top: 17px;
}

.delims {
  position: relative;
  width: 110px;
  height: 115px;
  border: 1px solid #dcdcdc;
  padding: 11px 0 0 8px;
}

.delims-legend {
  position: absolute;
  left: 0;
  top: -11px;
  width: 61px;
  height: 22px;
  border: 3px solid #f00;
  background-color: #f0f0f0;
  padding-left: 3px;
  line-height: 16px;
}

.chk {
  height: 19px;
  display: flex;
  align-items: center;
  gap: 4px;
}

.box {
  flex: none;
  width: 13px;
  height: 13px;
  border: 1px solid #333;
  background-color: #fff;
}

.checked {
  border-color: #666;
}

.chk-other {
  height: 21px;
}

.other-input {
  width: 30px;
  height: 20px;
  margin-left: 9px;
  border: 1px solid #aaa;
  background-color: #fff;
}

.opts-right {
  margin: 29px 0 0 9px;
}

.qualifier {
  margin-top: 10px;
  display: flex;
  align-items: center;
}

.q-label {
  width: 79px;
  margin-top: -2px;
}

.select {
  width: 119px;
  height: 22px;
  border: 1px solid #bbb;
  background-color: #fff;
  display: flex;
  align-items: stretch;
  justify-content: space-between;
  padding-left: 4px;
  line-height: 18px;
}

.select-btn {
  width: 17px;
  background-color: #ccc;
  display: flex;
  align-items: center;
  justify-content: center;
}

.preview-set {
  position: relative;
  width: 492px;
  height: 139px;
  margin-top: 34px;
  border: 1px solid #dcdcdc;
  padding: 40px 0 0 8px;
}

.preview-legend {
  position: absolute;
  left: 5px;
  top: -8px;
  padding-right: 2px;
  background-color: #f0f0f0;
  line-height: 14px;
}

.preview-row {
  display: flex;
}

.preview {
  width: 458px;
  height: 77px;
  border: 1px solid #000;
  border-bottom: 0;
  background-color: #fff;
  font-family: 'Liberation Mono', monospace;
  font-size: 11.67px;
  line-height: 20px;
  text-indent: -1px;
  color: #111;
}

.pv-vbar {
  width: 16px;
  margin-left: 1px;
  padding: 6px 0 6px 2px;
  display: flex;
  flex-direction: column;
  justify-content: space-between;
  align-items: center;
}

.pv-hbar {
  width: 456px;
  height: 14px;
  padding: 2px 4px 0 5px;
  display: flex;
  justify-content: space-between;
}

.dlg-btns {
  display: flex;
  justify-content: flex-end;
  gap: 10px;
  width: 492px;
  margin-top: 13px;
}

button {
  width: 74px;
  height: 22px;
  padding-bottom: 2px;
  border: 1px solid #adadad;
  background-color: #e1e1e1;
  font-family: 'Open Sans', sans-serif;
  font-size: 11.2px;
  color: #000;
}

.btn-next {
  border: 3px solid #f00;
  box-shadow: -1px 0 0 #0078d7;
  padding: 0;
}

.btn-next span {
  display: block;
  height: 16px;
  line-height: 14px;
  border: 1px dotted #000;
}
```
